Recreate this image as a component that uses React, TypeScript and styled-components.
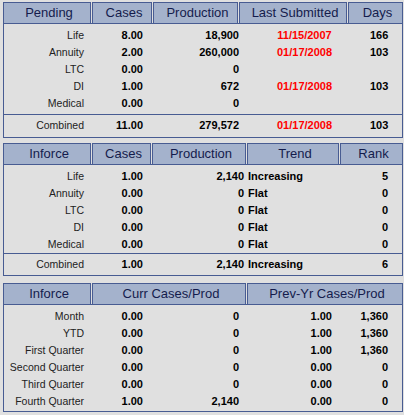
import React from "react";
import styled, { createGlobalStyle } from "styled-components";

const NAVY = "#485c92";
const HEAD_BG = "#a4b2cc";
const BODY_BG = "#e0e0e0";

const GlobalStyle = createGlobalStyle`
  html, body { margin: 0; padding: 0; background: ${BODY_BG}; }
  body { font-family: "Liberation Sans", Arial, sans-serif; }
`;

const Page = styled.div`
  width: 400px;
  padding: 2px 0 0 3px;
  display: flex;
  flex-direction: column;
`;

const Panel = styled.section<{ $mb: number }>`
  display: flex;
  flex-direction: column;
  margin-bottom: ${(p) => p.$mb}px;
`;

const HeaderRow = styled.div<{ $cols: string }>`
  display: grid;
  grid-template-columns: ${(p) => p.$cols};
  column-gap: 1px;
`;

const HeaderCell = styled.div`
  background: ${HEAD_BG};
  border: 1px solid ${NAVY};
  border-bottom: none;
  height: 20px;
  line-height: 20px;
  text-align: center;
  padding-left: 4px;
  font-size: 13px;
  color: #141c4c;
  white-space: nowrap;
  overflow: hidden;
`;

const Body = styled.div<{ $pt: number; $pb: number }>`
  border: 1px solid ${NAVY};
  background: ${BODY_BG};
  padding: ${(p) => p.$pt}px 0 ${(p) => p.$pb}px;
`;

const Row = styled.div<{ $cols: string }>`
  display: grid;
  grid-template-columns: ${(p) => p.$cols};
  height: 17px;
  line-height: 17px;
  align-items: center;
`;

const Separator = styled.div<{ $mt: number; $mb: number }>`
  border-top: 1px solid ${NAVY};
  margin: ${(p) => p.$mt}px 0 ${(p) => p.$mb}px;
`;

const Label = styled.div`
  text-align: right;
  font-size: 10.5px;
  color: #222;
  white-space: nowrap;
`;

const Cell = styled.div<{ $align?: string; $red?: boolean; $pl?: number; $pr?: number }>`
  text-align: ${(p) => p.$align || "right"};
  font-size: 11px;
  font-weight: bold;
  color: ${(p) => (p.$red ? "#ff0000" : "#000")};
  padding-left: ${(p) => p.$pl || 0}px;
  padding-right: ${(p) => p.$pr || 0}px;
  white-space: nowrap;
`;

type Line = [string, string, string, string, string];

const pending: Line[] = [
  ["Life", "8.00", "18,900", "11/15/2007", "166"],
  ["Annuity", "2.00", "260,000", "01/17/2008", "103"],
  ["LTC", "0.00", "0", "", ""],
  ["DI", "1.00", "672", "01/17/2008", "103"],
  ["Medical", "0.00", "0", "", ""],
];
const pendingTotal: Line = ["Combined", "11.00", "279,572", "01/17/2008", "103"];

const inforce: Line[] = [
  ["Life", "1.00", "2,140", "Increasing", "5"],
  ["Annuity", "0.00", "0", "Flat", "0"],
  ["LTC", "0.00", "0", "Flat", "0"],
  ["DI", "0.00", "0", "Flat", "0"],
  ["Medical", "0.00", "0", "Flat", "0"],
];
const inforceTotal: Line = ["Combined", "1.00", "2,140", "Increasing", "6"];

const periods: Line[] = [
  ["Month", "0.00", "0", "1.00", "1,360"],
  ["YTD", "0.00", "0", "1.00", "1,360"],
  ["First Quarter", "0.00", "0", "1.00", "1,360"],
  ["Second Quarter", "0.00", "0", "0.00", "0"],
  ["Third Quarter", "0.00", "0", "0.00", "0"],
  ["Fourth Quarter", "1.00", "2,140", "0.00", "0"],
];

const P1_HEAD = "88px 60px 85px 108px 1fr";
const P1_BODY = "80px 59px 96px 131px 1fr";
const P2_HEAD = "88px 59px 94px 92px 1fr";
const P2_BODY = "80px 59px 101px 1fr 40px";
const P3_HEAD = "88px 154px 1fr";
const P3_BODY = "80px 59px 96px 93px 1fr";

const PendingLine = ({ r }: { r: Line }) => (
  <Row $cols={P1_BODY}>
    <Label>{r[0]}</Label>
    <Cell>{r[1]}</Cell>
    <Cell>{r[2]}</Cell>
    <Cell $align="center" $red>{r[3]}</Cell>
    <Cell $pr={14}>{r[4]}</Cell>
  </Row>
);

const InforceLine = ({ r }: { r: Line }) => (
  <Row $cols={P2_BODY}>
    <Label>{r[0]}</Label>
    <Cell>{r[1]}</Cell>
    <Cell>{r[2]}</Cell>
    <Cell $align="left" $pl={4}>{r[3]}</Cell>
    <Cell $pr={14}>{r[4]}</Cell>
  </Row>
);

const PeriodLine = ({ r }: { r: Line }) => (
  <Row $cols={P3_BODY}>
    <Label>{r[0]}</Label>
    <Cell>{r[1]}</Cell>
    <Cell>{r[2]}</Cell>
    <Cell>{r[3]}</Cell>
    <Cell $pr={14}>{r[4]}</Cell>
  </Row>
);

export default function App() {
  return (
    <>
      <GlobalStyle />
      <Page>
        <Panel $mb={5}>
          <HeaderRow $cols={P1_HEAD}>
            <HeaderCell>Pending</HeaderCell>
            <HeaderCell>Cases</HeaderCell>
            <HeaderCell>Production</HeaderCell>
            <HeaderCell>Last Submitted</HeaderCell>
            <HeaderCell>Days</HeaderCell>
          </HeaderRow>
          <Body $pt={3} $pb={3}>
            {pending.map((r) => (
              <PendingLine key={r[0]} r={r} />
            ))}
            <Separator $mt={2} $mb={2} />
            <PendingLine r={pendingTotal} />
          </Body>
        </Panel>
        <Panel $mb={7}>
          <HeaderRow $cols={P2_HEAD}>
            <HeaderCell>Inforce</HeaderCell>
            <HeaderCell>Cases</HeaderCell>
            <HeaderCell>Production</HeaderCell>
            <HeaderCell>Trend</HeaderCell>
            <HeaderCell>Rank</HeaderCell>
          </HeaderRow>
          <Body $pt={3} $pb={2}>
            {inforce.map((r) => (
              <InforceLine key={r[0]} r={r} />
            ))}
            <Separator $mt={0} $mb={2} />
            <InforceLine r={inforceTotal} />
          </Body>
        </Panel>
        <Panel $mb={0}>
          <HeaderRow $cols={P3_HEAD}>
            <HeaderCell>Inforce</HeaderCell>
            <HeaderCell>Curr Cases/Prod</HeaderCell>
            <HeaderCell>Prev-Yr Cases/Prod</HeaderCell>
          </HeaderRow>
          <Body $pt={3} $pb={1}>
            {periods.map((r) => (
              <PeriodLine key={r[0]} r={r} />
            ))}
          </Body>
        </Panel>
      </Page>
    </>
  );
}
